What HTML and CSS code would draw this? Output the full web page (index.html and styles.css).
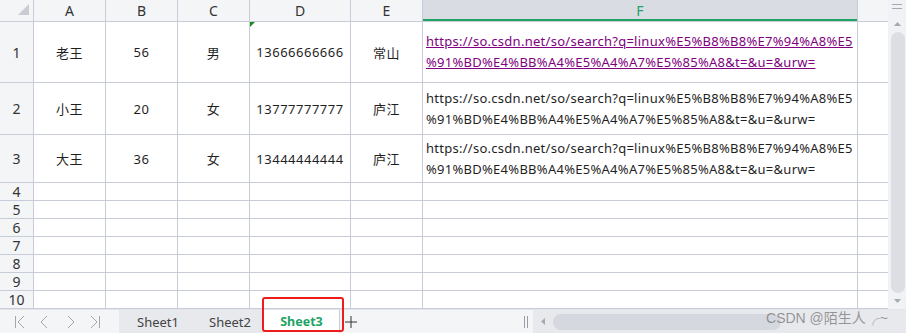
FILE: index.html
```html
<!DOCTYPE html>
<html lang="zh-CN">
  <head>
    <meta charset="UTF-8" />
    <meta name="viewport" content="width=device-width, initial-scale=1.0" />
    <title>Sheet3</title>
    <link rel="stylesheet" href="styles.css">
  </head>
  <body>
    <div class="book">
      <div class="main">
        <div class="grid">
          <!-- header row -->
          <div class="cell corner">
            <svg width="12" height="12" viewBox="0 0 12 12"><polygon points="0,11 11,11 11,0" fill="#c9ccd2" /></svg>
          </div>
          <div class="cell colhead">A</div>
          <div class="cell colhead">B</div>
          <div class="cell colhead">C</div>
          <div class="cell colhead">D</div>
          <div class="cell colhead">E</div>
          <div class="cell colhead active">F</div>
          <div class="cell colhead"></div>

          <div class="cell rowhead">1</div>
          <div class="cell">老王</div>
          <div class="cell">56</div>
          <div class="cell">男</div>
          <div class="cell num-text">13666666666</div>
          <div class="cell">常山</div>
          <div class="cell url"><a class="link">https://so.csdn.net/so/search?q=linux%E5%B8%B8%E7%94%A8%E5 %91%BD%E4%BB%A4%E5%A4%A7%E5%85%A8&amp;t=&amp;u=&amp;urw=</a></div>
          <div class="cell"></div>

          <div class="cell rowhead">2</div>
          <div class="cell">小王</div>
          <div class="cell">20</div>
          <div class="cell">女</div>
          <div class="cell">13777777777</div>
          <div class="cell">庐江</div>
          <div class="cell url">https://so.csdn.net/so/search?q=linux%E5%B8%B8%E7%94%A8%E5 %91%BD%E4%BB%A4%E5%A4%A7%E5%85%A8&amp;t=&amp;u=&amp;urw=</div>
          <div class="cell"></div>

          <div class="cell rowhead">3</div>
          <div class="cell">大王</div>
          <div class="cell">36</div>
          <div class="cell">女</div>
          <div class="cell">13444444444</div>
          <div class="cell">庐江</div>
          <div class="cell url">https://so.csdn.net/so/search?q=linux%E5%B8%B8%E7%94%A8%E5 %91%BD%E4%BB%A4%E5%A4%A7%E5%85%A8&amp;t=&amp;u=&amp;urw=</div>
          <div class="cell"></div>

          <div class="cell rowhead">4</div>
          <div class="cell"></div><div class="cell"></div><div class="cell"></div><div class="cell"></div><div class="cell"></div><div class="cell"></div><div class="cell"></div>
          <div class="cell rowhead">5</div>
          <div class="cell"></div><div class="cell"></div><div class="cell"></div><div class="cell"></div><div class="cell"></div><div class="cell"></div><div class="cell"></div>
          <div class="cell rowhead">6</div>
          <div class="cell"></div><div class="cell"></div><div class="cell"></div><div class="cell"></div><div class="cell"></div><div class="cell"></div><div class="cell"></div>
          <div class="cell rowhead">7</div>
          <div class="cell"></div><div class="cell"></div><div class="cell"></div><div class="cell"></div><div class="cell"></div><div class="cell"></div><div class="cell"></div>
          <div class="cell rowhead">8</div>
          <div class="cell"></div><div class="cell"></div><div class="cell"></div><div class="cell"></div><div class="cell"></div><div class="cell"></div><div class="cell"></div>
          <div class="cell rowhead">9</div>
          <div class="cell"></div><div class="cell"></div><div class="cell"></div><div class="cell"></div><div class="cell"></div><div class="cell"></div><div class="cell"></div>
          <div class="cell rowhead">10</div>
          <div class="cell"></div><div class="cell"></div><div class="cell"></div><div class="cell"></div><div class="cell"></div><div class="cell"></div><div class="cell"></div>
        </div>

        <div class="vscroll">
          <svg class="grip" width="10" height="5" viewBox="0 0 10 5"><path d="M0 0.5h10M0 4.5h10" stroke="#a6a9b0" stroke-width="1" /></svg>
          <svg class="arrow" width="7" height="4" viewBox="0 0 7 4"><polygon points="0,4 7,4 3.5,0" fill="#a6a9b0" /></svg>
          <div class="vthumb"></div>
          <svg class="arrow" width="7" height="4" viewBox="0 0 7 4"><polygon points="0,0 7,0 3.5,4" fill="#a6a9b0" /></svg>
        </div>
      </div>

      <div class="tabbar">
        <div class="nav">
          <svg width="12" height="14" viewBox="0 0 12 14"><path d="M1.5 1v12M10 1L4 7l6 6" fill="none" stroke="#a3a7ae" stroke-width="1" /></svg>
          <svg width="12" height="14" viewBox="0 0 12 14"><path d="M8 1L2 7l6 6" fill="none" stroke="#a3a7ae" stroke-width="1" /></svg>
          <svg width="12" height="14" viewBox="0 0 12 14"><path d="M4 1l6 6-6 6" fill="none" stroke="#a3a7ae" stroke-width="1" /></svg>
          <svg width="12" height="14" viewBox="0 0 12 14"><path d="M2 1l6 6-6 6M10.5 1v12" fill="none" stroke="#a3a7ae" stroke-width="1" /></svg>
        </div>
        <div class="tabs">
          <div class="tab">Sheet1</div>
          <div class="tab">Sheet2</div>
          <div class="tab current">Sheet3</div>
        </div>
        <div class="add">
          <svg width="12" height="12" viewBox="0 0 12 12"><path d="M6 0v12M0 6h12" stroke="#333" stroke-width="1" /></svg>
        </div>
        <div class="hbar">
          <span class="split"></span>
          <div class="htrack">
            <svg width="4" height="7" viewBox="0 0 4 7"><polygon points="4,0 4,7 0,3.5" fill="#a6a9b0" /></svg>
            <div class="hthumb"></div>
          </div>
        </div>
        <div class="mark-box"></div>
        <div class="watermark">CSDN @陌生人╭~</div>
      </div>
    </div>
  </body>
</html>
```

FILE: styles.css
```css
* {
  box-sizing: border-box;
}
body {
  margin: 0;
  padding: 0;
  background: #fff;
  font-family: "Noto Sans", "Noto Sans CJK SC", sans-serif;
  font-size: 13px;
  color: #1f1f1f;
}
.book {
  width: 906px;
  height: 333px;
  display: flex;
  flex-direction: column;
  position: relative;
  overflow: hidden;
}
.main {
  display: flex;
  height: 309px;
}

.grid {
  width: 888px;
  display: grid;
  grid-template-columns: 33px 71px 71px 71px 100px 71px 434px 30px;
  grid-template-rows: 21px 60px 51px 47px repeat(7, 17px);
  gap: 1px;
  background: #c8ccd9;
  padding-bottom: 1px;
}
.cell {
  background: #fff;
  display: flex;
  align-items: center;
  justify-content: center;
  white-space: nowrap;
  position: relative;
  letter-spacing: 0.5px;
}
.corner,
.colhead,
.rowhead {
  background: #f4f5f7;
  font-size: 14px;
  color: #333;
  letter-spacing: 0;
}
.corner {
  justify-content: flex-end;
  align-items: flex-end;
  padding: 0 3px 5px 0;
}
.corner svg {
  display: block;
}
.colhead.active {
  background: #d9dce3;
  color: #21a366;
  box-shadow: inset 0 -2px 0 #21a366;
}
.rowhead {
  line-height: 17px;
}
.num-text::before {
  content: "";
  position: absolute;
  top: 0;
  left: 0;
  border-top: 5px solid #1a8a1a;
  border-right: 5px solid transparent;
}
.url {
  justify-content: flex-start;
  white-space: normal;
  word-break: break-all;
  padding: 0 3px;
  line-height: 21px;
  font-size: 13px;
  letter-spacing: 0.27px;
}
.link {
  color: #800080;
  text-decoration: underline;
}

.vscroll {
  width: 18px;
  background: #f1f2f5;
  display: flex;
  flex-direction: column;
  align-items: center;
  padding-top: 4px;
}
.vscroll .grip {
  margin-bottom: 13px;
}
.vthumb {
  width: 14px;
  flex: 1;
  margin: 6px 0 6px 2px;
  background: #dcdee4;
  border-radius: 7px;
}
.vscroll .arrow:last-child {
  margin-bottom: 6px;
}

.tabbar {
  flex: 1;
  display: flex;
  align-items: stretch;
  background: #f4f5f7;
  border-top: 1px solid #e3e5ea;
}
.nav {
  width: 119px;
  display: flex;
  align-items: center;
  gap: 13px;
  padding-left: 14px;
}
.nav svg {
  display: block;
}
.tabs {
  display: flex;
  background: #e8e9ed;
  padding-left: 3px;
}
.tab {
  width: 72px;
  display: flex;
  align-items: center;
  justify-content: center;
  color: #444;
  font-size: 13px;
}
.tab.current {
  width: 76px;
  margin-left: -2px;
  background: #fff;
  color: #21a366;
  font-weight: bold;
  font-size: 12.5px;
  border-right: 1px solid #c9ccd3;
}
.add {
  display: flex;
  align-items: center;
  padding-left: 5px;
}
.add svg {
  display: block;
}
.hbar {
  flex: 1;
  display: flex;
  align-items: center;
  padding-left: 167px;
}
.split {
  width: 4px;
  height: 12px;
  border-left: 1px solid #9a9da4;
  border-right: 1px solid #9a9da4;
  margin-right: 5px;
}
.htrack {
  flex: 1;
  align-self: stretch;
  display: flex;
  align-items: center;
  background: #e8e9ed;
  padding: 2px 0 2px 8px;
}
.htrack svg {
  display: block;
}
.hthumb {
  width: 228px;
  height: 16px;
  margin-left: 8px;
  border-radius: 8px;
  background: #d5d8df;
}

.mark-box {
  position: absolute;
  left: 262px;
  top: 297px;
  width: 82px;
  height: 35px;
  border: 2px solid #ee1c1c;
  border-radius: 3px;
}
.watermark {
  position: absolute;
  right: 18px;
  bottom: 6px;
  font-family: "Liberation Sans", "Noto Sans CJK SC", sans-serif;
  font-size: 14px;
  color: rgba(110, 110, 110, 0.7);
}
```
